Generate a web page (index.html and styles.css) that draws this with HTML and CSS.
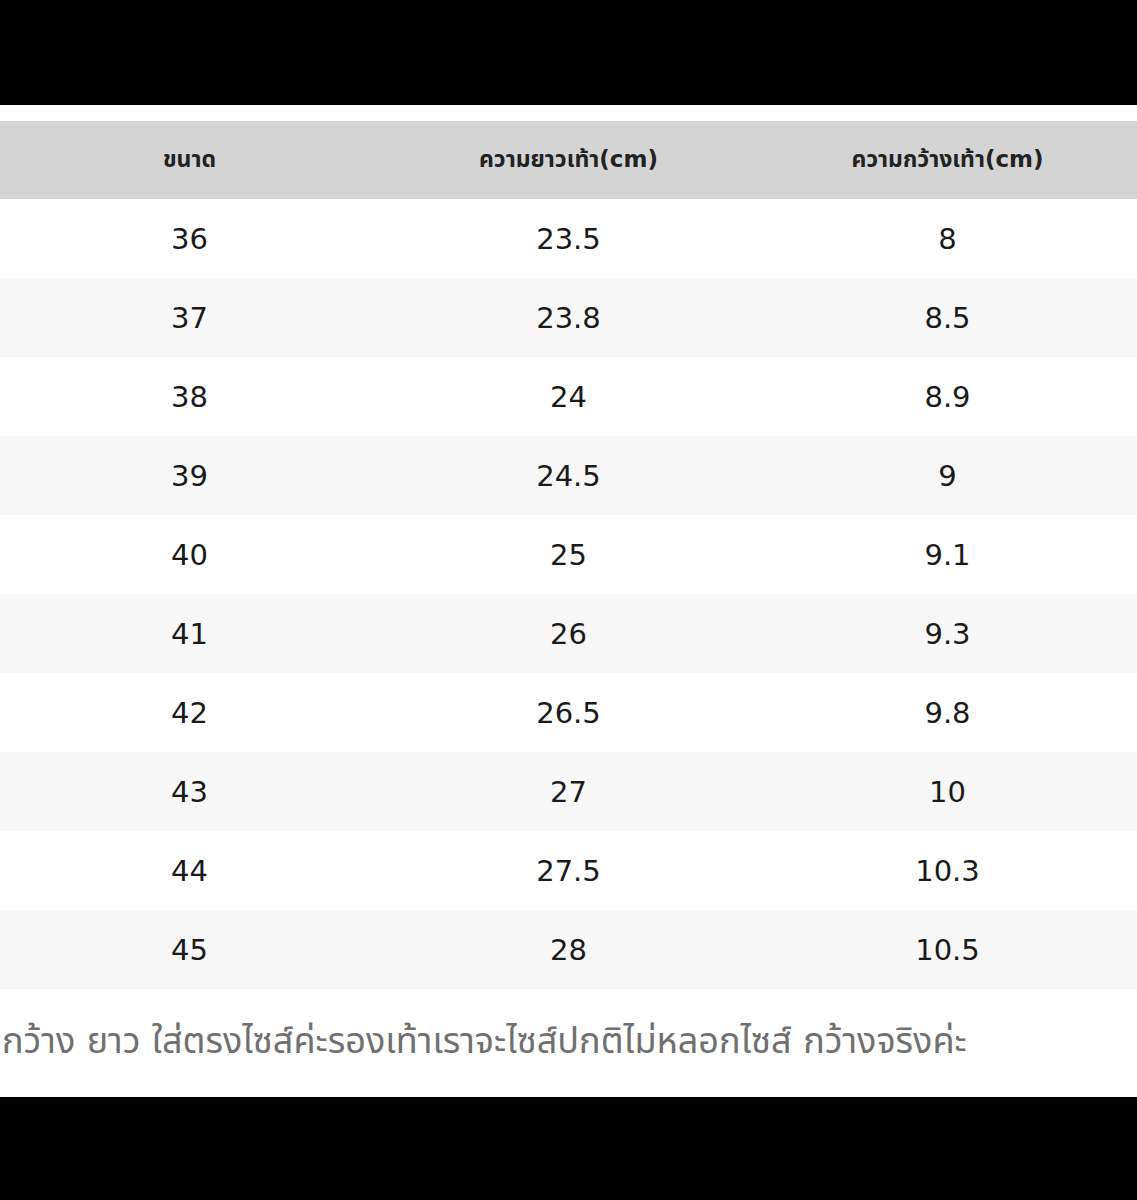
FILE: index.html
```html
<!DOCTYPE html>
<html lang="th">
<head>
<meta charset="utf-8">
<link rel="stylesheet" href="styles.css">
</head>
<body>
<div class="bar top"></div>
<main class="sheet">
  <div class="table">
    <div class="row head"><div>ขนาด</div><div>ความยาวเท้า(cm)</div><div>ความกว้างเท้า(cm)</div></div>
    <div class="row"><div>36</div><div>23.5</div><div>8</div></div>
    <div class="row alt"><div>37</div><div>23.8</div><div>8.5</div></div>
    <div class="row"><div>38</div><div>24</div><div>8.9</div></div>
    <div class="row alt"><div>39</div><div>24.5</div><div>9</div></div>
    <div class="row"><div>40</div><div>25</div><div>9.1</div></div>
    <div class="row alt"><div>41</div><div>26</div><div>9.3</div></div>
    <div class="row"><div>42</div><div>26.5</div><div>9.8</div></div>
    <div class="row alt"><div>43</div><div>27</div><div>10</div></div>
    <div class="row"><div>44</div><div>27.5</div><div>10.3</div></div>
    <div class="row alt"><div>45</div><div>28</div><div>10.5</div></div>
  </div>
  <p class="note">กว้าง ยาว ใส่ตรงไซส์ค่ะรองเท้าเราจะไซส์ปกติไม่หลอกไซส์ กว้างจริงค่ะ</p>
</main>
<div class="bar bottom"></div>
</body>
</html>
```
FILE: styles.css
```css
html, body { margin: 0; padding: 0; background: #000; }
body { width: 1137px; height: 1200px; overflow: hidden; font-family: "DejaVu Sans", "Noto Sans Thai", "Noto Sans Thai UI", "Noto Sans", sans-serif; }
.bar.top { height: 105px; background: #000; }
.bar.bottom { height: 103px; background: #000; }
.sheet { height: 992px; background: #fff; padding-top: 16px; box-sizing: border-box; display: flex; flex-direction: column; }
.table { display: flex; flex-direction: column; }
.row { display: grid; grid-template-columns: 379px 379px 379px; height: 79px; align-items: center; text-align: center; font-size: 29px; color: #1a1a1a; }
.row.head { height: 78px; background: #d4d4d4; font-size: 23px; font-weight: bold; color: #222; }
.row.alt { background: #f7f7f7; }
.note { margin: 0; padding: 30px 0 0 2px; font-size: 36px; color: #707070; white-space: nowrap; line-height: 44px; }
```
